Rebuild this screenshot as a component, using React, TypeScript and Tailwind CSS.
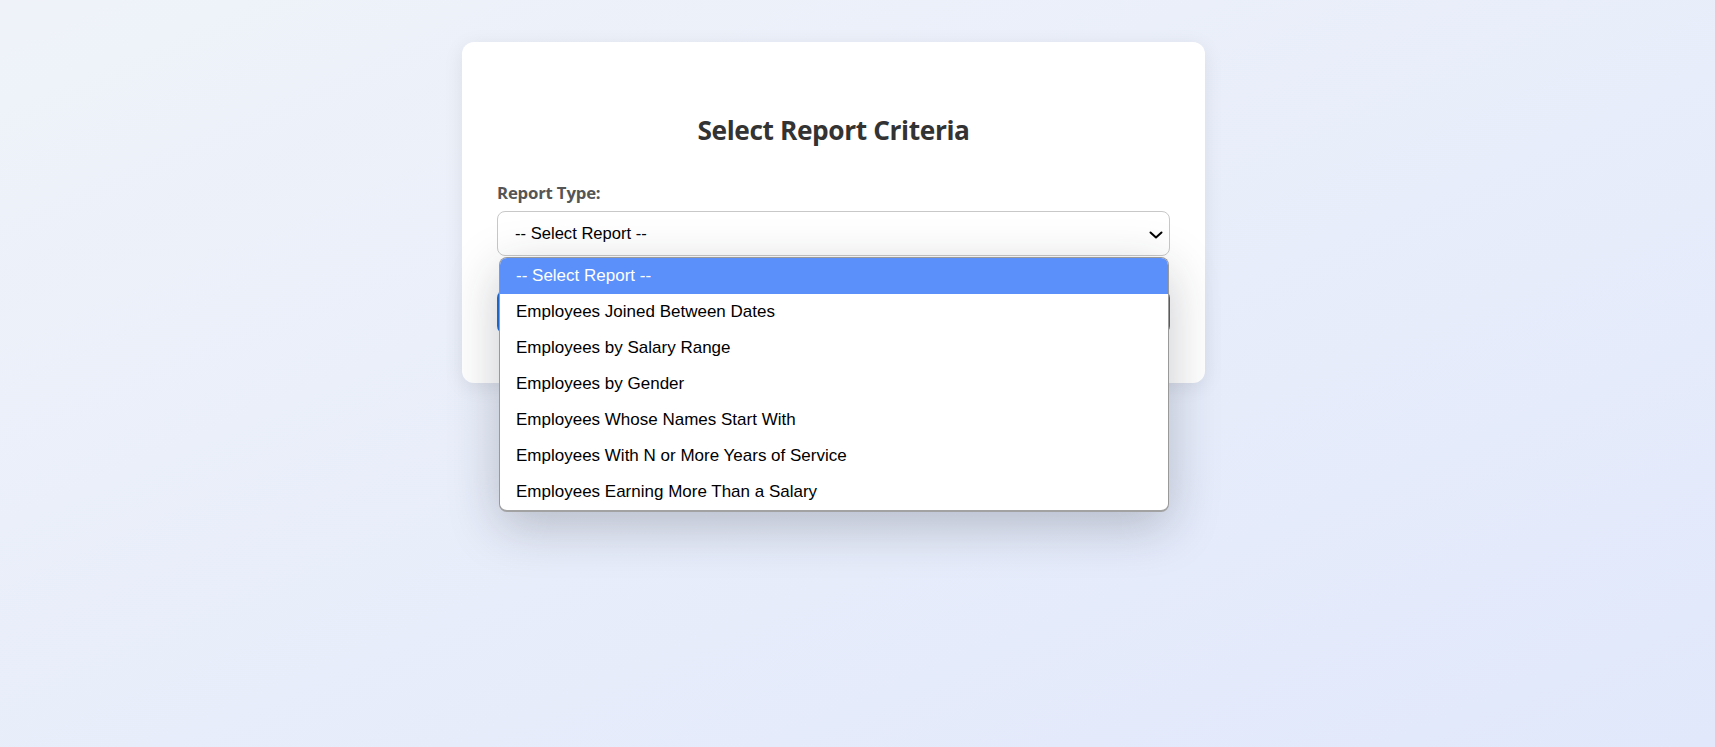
import React from 'react';

const options = [
  '-- Select Report --',
  'Employees Joined Between Dates',
  'Employees by Salary Range',
  'Employees by Gender',
  'Employees Whose Names Start With',
  'Employees With N or More Years of Service',
  'Employees Earning More Than a Salary',
];

export default function App() {
  const selected = 0;

  return (
    <div className="min-h-screen bg-gradient-to-br from-[#eff3f9] to-[#e1e8fb] flex justify-center items-start pr-[48px] pt-[42px] font-['Open_Sans',sans-serif]">
      <div className="w-[743px] bg-white rounded-[12px] shadow-[0_4px_20px_rgba(0,0,0,0.08)] px-[35px] pt-[70px] pb-[49px]">
        <h2 className="text-center font-bold text-[26.3px] leading-[37px] text-[#333] tracking-[-0.4px]">
          Select Report Criteria
        </h2>

        <div className="relative mt-[32px]">
          <label className="block font-bold text-[16.8px] leading-[23px] text-[#555] mb-[7px] tracking-[-0.2px]">
            Report Type:
          </label>

          {/* closed select */}
          <div className="h-[45px] border border-[#c8c8c8] rounded-[8px] bg-white flex items-center justify-between pl-[17px] pr-[6px] pt-[1px] font-['Liberation_Sans',Arial,sans-serif] text-[16.6px] text-black">
            <span>-- Select Report --</span>
            <svg width="14" height="14" viewBox="0 0 14 14" fill="none" className="mt-[1px]">
              <path d="M1.5 4.5 L7 9.5 L12.5 4.5" stroke="#000" strokeWidth="2" strokeLinecap="round" strokeLinejoin="round" />
            </svg>
          </div>

          {/* open option list */}
          <div className="absolute left-[2px] right-[1px] top-[76px] z-10 bg-white border border-[#999] border-b-[2px] border-b-[#a2a2a2] rounded-[8px] overflow-hidden shadow-[0_14px_50px_rgba(30,35,50,0.25)] font-['Liberation_Sans',Arial,sans-serif] text-[17px]">
            {options.map((o, i) => (
              <div
                key={o}
                className={
                  i === selected
                    ? 'h-[36px] flex items-center pl-[16px] bg-[#5b8ffa] text-white'
                    : 'h-[36px] flex items-center pl-[16px] text-black'
                }
              >
                {o}
              </div>
            ))}
          </div>
        </div>

        <button className="mt-[34px] h-[44px] w-full rounded-[8px] bg-[#1f6fdc] text-white font-bold text-[16px]">
          Generate Report
        </button>
      </div>
    </div>
  );
}
